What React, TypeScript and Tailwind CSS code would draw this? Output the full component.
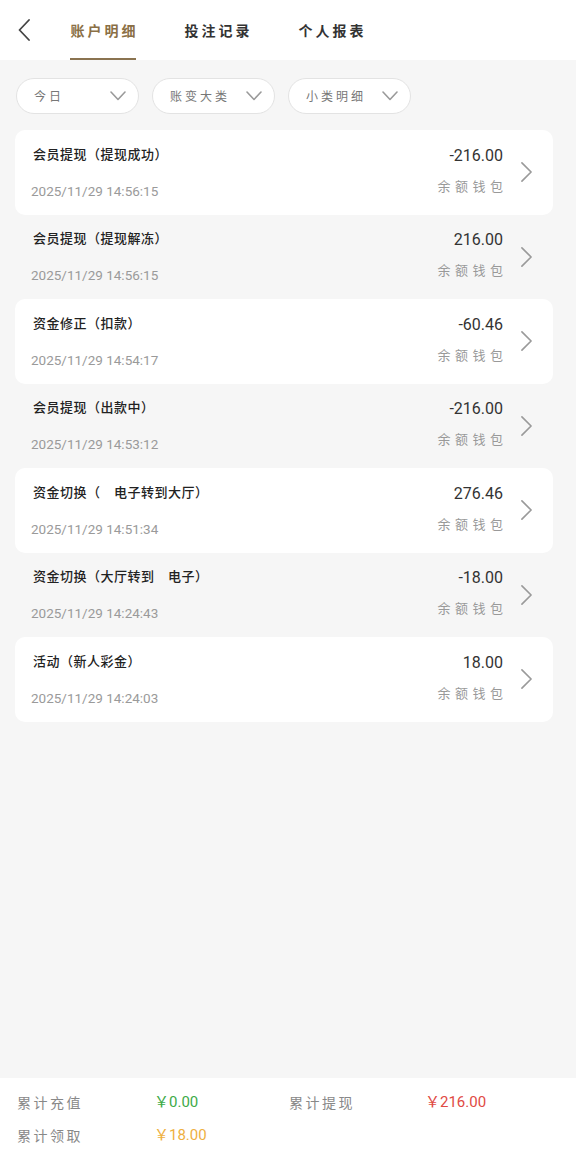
import React from "react";

const rows = [
  { title: "会员提现（提现成功）", date: "2025/11/29 14:56:15", amount: "-216.00", white: true },
  { title: "会员提现（提现解冻）", date: "2025/11/29 14:56:15", amount: "216.00", white: false },
  { title: "资金修正（扣款）", date: "2025/11/29 14:54:17", amount: "-60.46", white: true },
  { title: "会员提现（出款中）", date: "2025/11/29 14:53:12", amount: "-216.00", white: false },
  { title: "资金切换（　电子转到大厅）", date: "2025/11/29 14:51:34", amount: "276.46", white: true },
  { title: "资金切换（大厅转到　电子）", date: "2025/11/29 14:24:43", amount: "-18.00", white: false },
  { title: "活动（新人彩金）", date: "2025/11/29 14:24:03", amount: "18.00", white: true },
];

const cjk = { fontFamily: '"Noto Sans CJK SC", "Noto Sans", sans-serif' };
const num = { fontFamily: 'Roboto, "Noto Sans CJK SC", sans-serif' };

function Chevron({ className }: { className?: string }) {
  return (
    <svg viewBox="0 0 14 24" className={className} fill="none" stroke="currentColor" strokeWidth="1.8" strokeLinecap="round" strokeLinejoin="round">
      <path d="M2 2 L12 12 L2 22" />
    </svg>
  );
}

function Down() {
  return (
    <svg viewBox="0 0 16 10" className="w-[16px] h-[10px] text-[#9a9a9a]" fill="none" stroke="currentColor" strokeWidth="1.6" strokeLinecap="round" strokeLinejoin="round">
      <path d="M1 1 L8 8.5 L15 1" />
    </svg>
  );
}

export default function App() {
  return (
    <div className="min-h-[1150px] w-[576px] bg-[#f6f6f6] flex flex-col" style={cjk}>
      <div className="h-[60px] bg-white flex items-stretch">
        <div className="w-[70px] flex items-center pl-[18px]">
          <svg viewBox="0 0 12 22" className="w-[12px] h-[22px] text-[#444]" fill="none" stroke="currentColor" strokeWidth="1.8" strokeLinecap="round" strokeLinejoin="round">
            <path d="M11 1 L1.5 11 L11 21" />
          </svg>
        </div>
        <div className="flex gap-[48px]">
          <div className="w-[66px] relative flex items-center justify-center">
            <span className="text-[14px] font-bold tracking-[3px] text-[#8a6f45] mr-[-3px]">账户明细</span>
            <div className="absolute bottom-0 left-0 right-0 h-[2px] bg-[#8a7350]" />
          </div>
          <div className="w-[66px] flex items-center justify-center">
            <span className="text-[14px] font-bold tracking-[3px] text-[#333] mr-[-3px]">投注记录</span>
          </div>
          <div className="w-[66px] flex items-center justify-center">
            <span className="text-[14px] font-bold tracking-[3px] text-[#333] mr-[-3px]">个人报表</span>
          </div>
        </div>
      </div>

      <div className="flex gap-[13px] pl-[16px] mt-[18px]">
        {["今日", "账变大类", "小类明细"].map((t) => (
          <div key={t} className="w-[123px] h-[36px] rounded-full bg-white border border-[#e3e3e3] flex items-center justify-between pl-[17px] pr-[12px]">
            <span className="text-[12px] tracking-[3px] text-[#777]">{t}</span>
            <Down />
          </div>
        ))}
      </div>

      <div className="flex flex-col pl-[15px] pr-[23px] mt-[16px] flex-1">
        {rows.map((r, i) => (
          <div key={i} className={`h-[84.5px] rounded-[10px] flex items-center pl-[18px] pr-[20px] ${r.white ? "bg-white" : "bg-[#f6f6f6]"}`}>
            <div className="flex-1 flex flex-col">
              <div className="text-[13px] leading-[20px] font-medium text-[#222] tracking-[0.5px]">{r.title}</div>
              <div className="text-[13.5px] leading-[20px] text-[#9a9a9a] mt-[17px] ml-[-2px]" style={num}>{r.date}</div>
            </div>
            <div className="flex flex-col items-end">
              <div className="text-[16px] leading-[22px] text-[#333] mt-[-4px]" style={num}>{r.amount}</div>
              <div className="text-[13px] leading-[20px] text-[#999] tracking-[4.5px] mr-[-4.5px] mt-[9px]">余额钱包</div>
            </div>
            <Chevron className="w-[13px] h-[22px] text-[#9a9a9a] ml-[17px]" />
          </div>
        ))}
      </div>

      <div className="h-[72px] bg-white pt-[14px] pl-[17px]">
        <div className="grid grid-cols-[140px_132px_139px_1fr] gap-y-[13px] text-[14px] leading-[20px] items-center">
          <div className="text-[#888] tracking-[2.5px]">累计充值</div>
          <div className="text-[15px] text-[#3daa48] ml-[-3px]" style={num}>￥0.00</div>
          <div className="text-[#888] tracking-[2.5px]">累计提现</div>
          <div className="text-[15px] text-[#df4a44] ml-[-3px]" style={num}>￥216.00</div>
          <div className="text-[#888] tracking-[2.5px]">累计领取</div>
          <div className="text-[15px] text-[#eeb03f] ml-[-3px]" style={num}>￥18.00</div>
        </div>
      </div>
    </div>
  );
}
